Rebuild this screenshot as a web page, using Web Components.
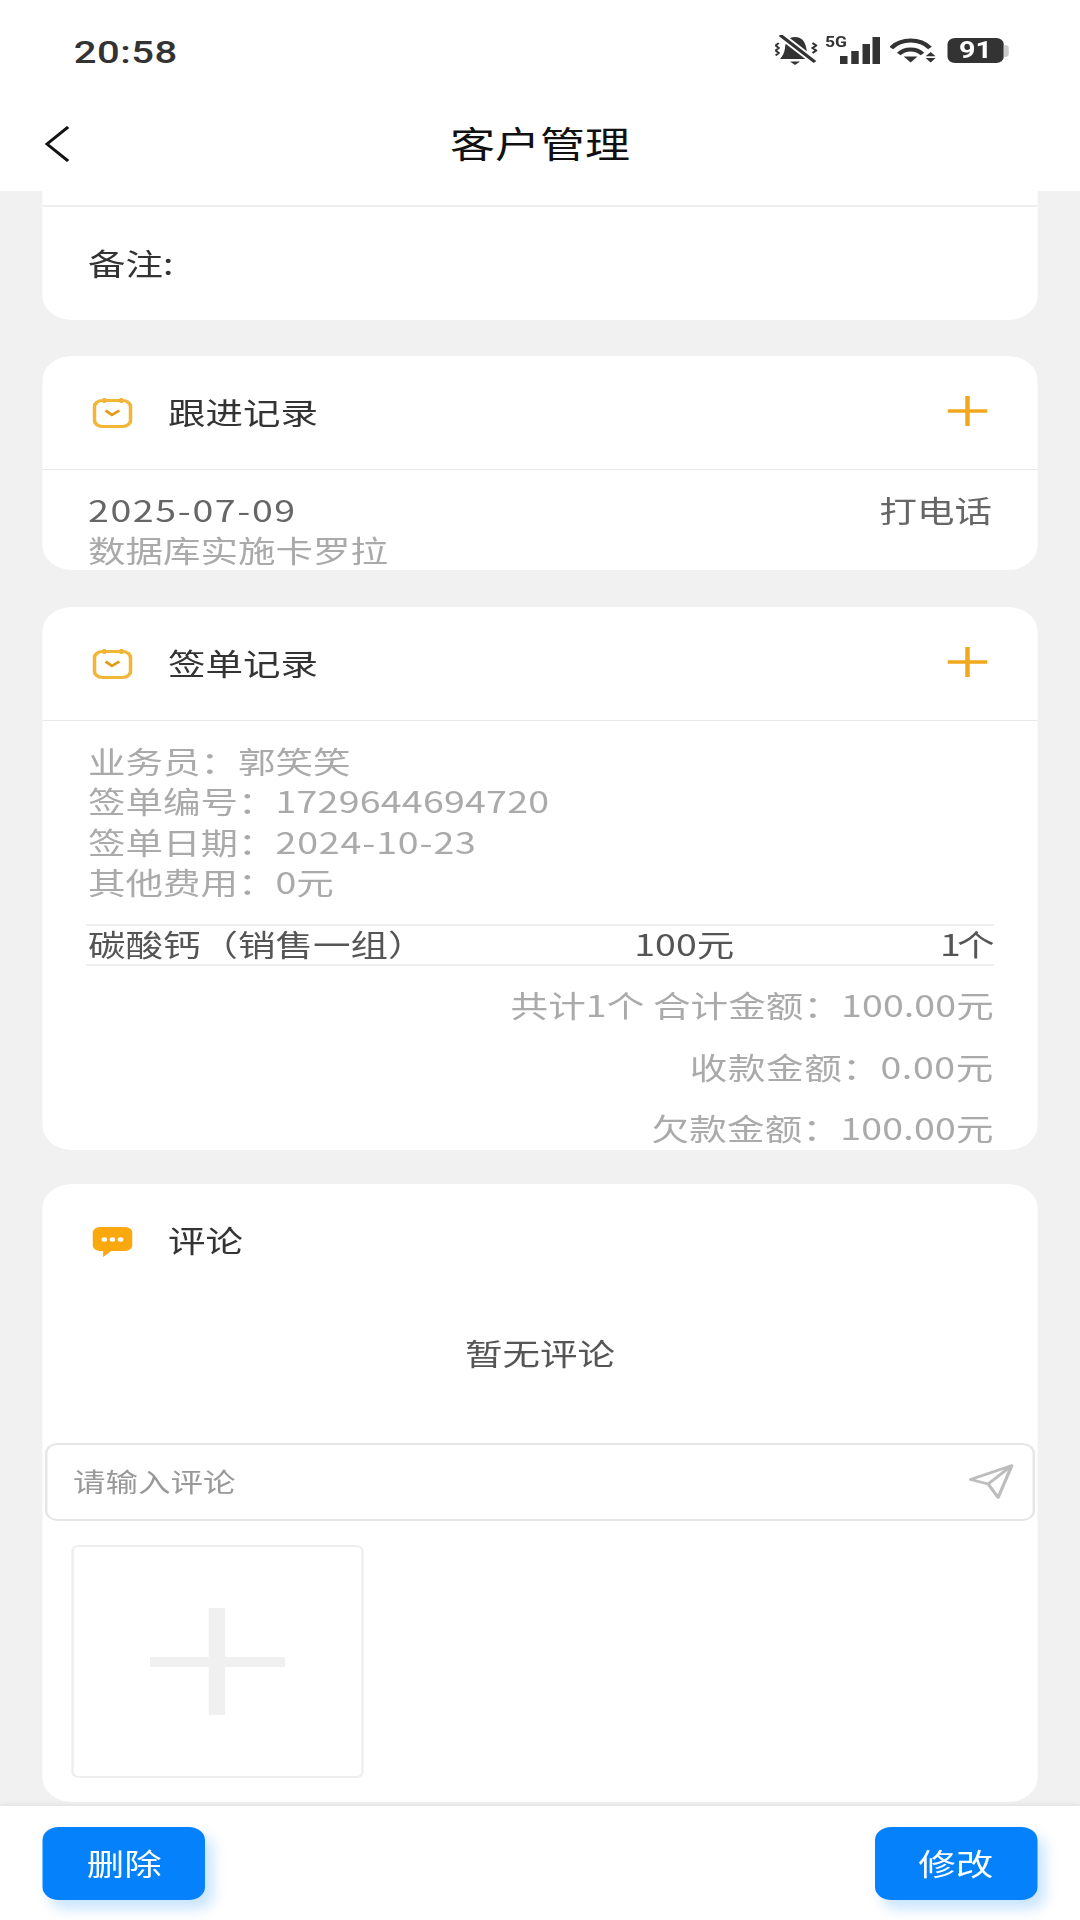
<!DOCTYPE html>
<html lang="zh">
<head>
<meta charset="utf-8">
<title>客户管理</title>
<style>
  html, body { margin: 0; padding: 0; background: #f1f1f1; overflow: hidden; }
  body { width: 1080px; height: 1920px; font-family: "Noto Sans CJK SC", sans-serif; }
  /* the reference is stretched sideways: lay out at 864 wide, scale to 1080 */
  #page { width: 864px; height: 1920px; transform: scaleX(1.25); transform-origin: 0 0; display: flex; flex-direction: column; }
  #scroll { flex: none; height: 1615px; overflow: hidden; padding: 0 34.4px; display: flex; flex-direction: column; }
  .rows { padding: 19px 36px 0; font-size: 30px; line-height: 40px; color: #666; }
  .between { display: flex; justify-content: space-between; }
  .date { letter-spacing: 1.3px; }
  .faint { color: #aaa; }
</style>
</head>
<body>
<div id="page">
  <status-bar></status-bar>
  <nav-bar>客户管理</nav-bar>
  <div id="scroll">
    <info-card flat gap="36" height="129">
      <div style="height:14px;border-bottom:2px solid #eee"></div>
      <div style="padding:35px 36px 0;font-size:30px;line-height:40px;color:#333">备注:</div>
    </info-card>
    <info-card gap="37" height="214" heading="跟进记录" icon="calendar" add>
      <div class="rows">
        <div class="between"><span class="date">2025-07-09</span><span>打电话</span></div>
        <div class="faint">数据库实施卡罗拉</div>
      </div>
    </info-card>
    <info-card gap="34" height="543" heading="签单记录" icon="calendar" add>
      <sign-record></sign-record>
    </info-card>
    <info-card height="618" heading="评论" icon="comment" plain>
      <comment-box></comment-box>
    </info-card>
  </div>
  <foot-bar></foot-bar>
</div>

<script>
const statusTpl = document.createElement('template');
statusTpl.innerHTML = `
<style>
  :host { display: flex; flex: none; height: 88px; background: #fff; padding: 36px 57px 0 59px; box-sizing: border-box; justify-content: space-between; align-items: flex-start; }
  .time { font: 500 32px/32px Roboto, sans-serif; color: #333; letter-spacing: .4px; }
  .icons { display: flex; align-items: flex-start; margin-top: -1px; }
  svg { display: block; }
  .sig { position: relative; width: 44px; height: 30px; margin-left: 6px; }
  .sig span { position: absolute; left: 0; top: 0; font: 700 14px/14px Roboto, sans-serif; color: #333; }
  .sig svg { position: absolute; right: 0; top: 2px; }
  .bat { width: 45px; height: 25px; margin-left: 9px; margin-top: 3px; border-radius: 6px; background: #333; color: #fff; font: 700 23px/25px Roboto, sans-serif; text-align: center; }
  .nub { width: 4px; height: 12px; margin-top: 10px; background: #ccc; border-radius: 0 3px 3px 0; }
</style>
<span class="time">20:58</span>
<div class="icons">
  <svg width="34" height="30" viewBox="0 0 34 30">
    <path d="M16 2 C22 2 24 7 25 13 C25.5 18 27 21 28 24 H4 C6 21 7.5 18 8 13 C8.5 7 10 2 16 2 Z" fill="#333"/>
    <path d="M12 26.5 h8 l-4 3.5 z" fill="#333"/>
    <path d="M4 0 L32 27" stroke="#fff" stroke-width="6.5"/>
    <path d="M4 0 L32 27" stroke="#333" stroke-width="3"/>
    <path d="M3 8 l-2.4 2.5 l2.4 2.5 l-2.4 2.5 l2.4 2.5 l-2.4 2.5M30 8 l3 2.5 l-3 2.5 l3 2.5 l-3 2.5" stroke="#333" stroke-width="1.8" fill="none"/>
  </svg>
  <div class="sig">
    <span>5G</span>
    <svg width="32" height="27" viewBox="0 0 32 27"><path d="M0 19h6v8H0zM9 14h6v13H9zM18 7h6v20h-6zM26 0h6v27h-6z" fill="#333"/></svg>
  </div>
  <svg style="margin-left:8px;margin-top:3px" width="37" height="25" viewBox="0 0 37 25">
    <path d="M1 10 C9 0 24 0 32 10" stroke="#333" stroke-width="3.8" fill="none"/>
    <path d="M7 16 C12 10 21 10 26 16" stroke="#333" stroke-width="3.8" fill="none"/>
    <path d="M11 18.5 h11 l-5.5 6 z" fill="#333"/>
    <path d="M32.5 14 l4 4.2 h-8zM28.5 20 h8 l-4 4.4z" fill="#333"/>
  </svg>
  <div class="bat">91</div>
  <div class="nub"></div>
</div>`;

class StatusBar extends HTMLElement {
  constructor() {
    super();
    this.attachShadow({ mode: 'open' }).appendChild(statusTpl.content.cloneNode(true));
  }
}
customElements.define('status-bar', StatusBar);

const navTpl = document.createElement('template');
navTpl.innerHTML = `
<style>
  :host { display: flex; flex: none; position: relative; z-index: 1; height: 103px; background: #fff; padding: 0 0 10.5px; box-sizing: border-box; align-items: flex-end; justify-content: center; }
  .back { position: absolute; left: 35.5px; top: 38px; display: block; }
  .title { font-size: 36px; line-height: 54px; height: 66px; color: #111; }
</style>
<svg class="back" width="20" height="36" viewBox="0 0 20 36"><path d="M18.5 1 L1.5 18 L18.5 35" stroke="#111" stroke-width="2.6" fill="none"/></svg>
<span class="title"><slot></slot></span>`;

class NavBar extends HTMLElement {
  constructor() {
    super();
    this.attachShadow({ mode: 'open' }).appendChild(navTpl.content.cloneNode(true));
  }
}
customElements.define('nav-bar', NavBar);

const ICONS = {
  calendar: `<svg width="32" height="30" viewBox="0 0 32 30" fill="none" stroke="#f3b536">
    <rect x="1.5" y="2.5" width="29" height="26" rx="6.5" stroke-width="3"/>
    <path d="M9.5 0v5M23 0v5" stroke-width="2.6"/>
    <path d="M10.5 12.5L15.5 17 21.5 12.5" stroke="#e39a17" stroke-width="2.4" stroke-linejoin="miter"/>
  </svg>`,
  comment: `<svg width="32" height="30" viewBox="0 0 32 30">
    <path d="M6 0h20a6 6 0 0 1 6 6v12a6 6 0 0 1-6 6H15l-6.5 6v-6H6a6 6 0 0 1-6-6V6a6 6 0 0 1 6-6z" fill="#f9a80e"/>
    <circle cx="9.5" cy="12.5" r="2.2" fill="#fff"/><circle cx="16" cy="12.5" r="2.2" fill="#fff"/><circle cx="22.5" cy="12.5" r="2.2" fill="#fff"/>
  </svg>`
};

class InfoCard extends HTMLElement {
  connectedCallback() {
    const flat = this.hasAttribute('flat');
    const heading = this.getAttribute('heading');
    const plain = this.hasAttribute('plain');
    const head = heading ? `
      <div class="head${plain ? ' plain' : ''}">
        <span class="ic">${ICONS[this.getAttribute('icon')]}</span>
        <span class="name">${heading}</span>
        ${this.hasAttribute('add') ? `<svg class="add" width="32" height="30" viewBox="0 0 32 30"><path d="M0 15h32M16 0v30" stroke="#f2a81d" stroke-width="3.6"/></svg>` : ''}
      </div>` : '';
    this.attachShadow({ mode: 'open' }).innerHTML = `
      <style>
        :host {
          display: block; flex: none; background: #fff; overflow: hidden;
          height: ${this.getAttribute('height')}px;
          margin-bottom: ${this.getAttribute('gap') || 0}px;
          border-radius: ${flat ? '0 0 24px 24px / 0 0 24px 24px' : '24px'};
        }
        .head { display: flex; align-items: center; height: 114px; box-sizing: border-box; padding: 0 40px; border-bottom: 1.5px solid #e8e8e8; }
        .head.plain { border-bottom: 0; }
        .plain .ic { margin-top: 2px; }
        .ic { display: block; width: 32px; height: 30px; margin-right: 28px; }
        .ic svg, .add { display: block; }
        .name { font-size: 30px; line-height: 40px; color: #333; margin-bottom: 4px; }
        .add { margin-left: auto; margin-bottom: 3px; }
      </style>
      ${head}<slot></slot>`;
  }
}
customElements.define('info-card', InfoCard);

const signTpl = document.createElement('template');
signTpl.innerHTML = `
<style>
  :host { display: block; padding: 19px 36px 0; font-size: 30px; line-height: 40.4px; color: #aaa; }
  .num { letter-spacing: .2px; }
  .day { letter-spacing: .7px; }
  .tb { display: grid; grid-template-columns: 392px 170px 1fr; margin: 22px -1px 8.4px; border-top: 2px solid #eee; border-bottom: 2px solid #eee; color: #555; padding: 0 1px 3px; line-height: 35px; }
  .tb span:nth-child(2) { text-align: center; }
  .tb span:nth-child(3) { text-align: right; letter-spacing: -3px; padding-right: 1px; }
  .sum { text-align: right; line-height: 61.5px; letter-spacing: .2px; margin-right: -1.5px; }
  .sum.tight { letter-spacing: .1px; }
  .sum.wide { letter-spacing: .5px; }
</style>
<div>业务员：郭笑笑</div>
<div>签单编号：<span class="num">1729644694720</span></div>
<div>签单日期：<span class="day">2024-10-23</span></div>
<div>其他费用：0元</div>
<div class="tb"><span>碳酸钙（销售一组）</span><span>100元</span><span>1个</span></div>
<div class="sum tight">共计1个 合计金额：100.00元</div>
<div class="sum wide">收款金额：0.00元</div>
<div class="sum">欠款金额：100.00元</div>`;

class SignRecord extends HTMLElement {
  constructor() {
    super();
    this.attachShadow({ mode: 'open' }).appendChild(signTpl.content.cloneNode(true));
  }
}
customElements.define('sign-record', SignRecord);

const commentTpl = document.createElement('template');
commentTpl.innerHTML = `
<style>
  :host { display: block; }
  .empty { margin-top: 33.8px; height: 40px; font-size: 30px; line-height: 40px; color: #555; text-align: center; }
  .input { display: flex; align-items: center; justify-content: space-between; box-sizing: border-box; height: 78px; margin: 71.2px 2px 0; padding: 0 15px 0 20px; border: 2px solid #e6e6e6; border-radius: 10px; font-size: 26px; color: #999; }
  .input span { margin-bottom: 3px; }
  svg { display: block; }
  .upload { display: flex; align-items: center; justify-content: center; box-sizing: border-box; width: 234px; height: 233px; margin: 24px 0 0 23px; border: 2px solid #eee; border-radius: 6px; }
</style>
<div class="empty">暂无评论</div>
<div class="input">
  <span>请输入评论</span>
  <svg width="36" height="35" viewBox="0 0 36 35" fill="none" stroke="#bdbdbd" stroke-width="2.6" stroke-linejoin="round"><path d="M1.5 15.5 L34.5 1.5 L23.5 33.5 L15.5 20 Z M15.5 20 L34.5 1.5"/></svg>
</div>
<div class="upload">
  <svg width="108" height="107" viewBox="0 0 108 107"><path d="M0 49h108v10H0zM47 0h13v107H47z" fill="#f0f0f0"/></svg>
</div>`;

class CommentBox extends HTMLElement {
  constructor() {
    super();
    this.attachShadow({ mode: 'open' }).appendChild(commentTpl.content.cloneNode(true));
  }
}
customElements.define('comment-box', CommentBox);

const footTpl = document.createElement('template');
footTpl.innerHTML = `
<style>
  :host { display: flex; flex: none; justify-content: space-between; height: 114px; padding: 21px 34.4px 0; box-sizing: border-box; background: #fff; box-shadow: 0 -2px 4px rgba(0,0,0,.06); position: relative; }
  .btn { width: 130px; height: 73px; border-radius: 13px; background: #0582fb; color: #fff; font-size: 30px; line-height: 70px; text-align: center; box-shadow: 6px 9px 12px rgba(5,130,251,.22); }
</style>
<div class="btn">删除</div>
<div class="btn">修改</div>`;

class FootBar extends HTMLElement {
  constructor() {
    super();
    this.attachShadow({ mode: 'open' }).appendChild(footTpl.content.cloneNode(true));
  }
}
customElements.define('foot-bar', FootBar);
</script>
</body>
</html>
